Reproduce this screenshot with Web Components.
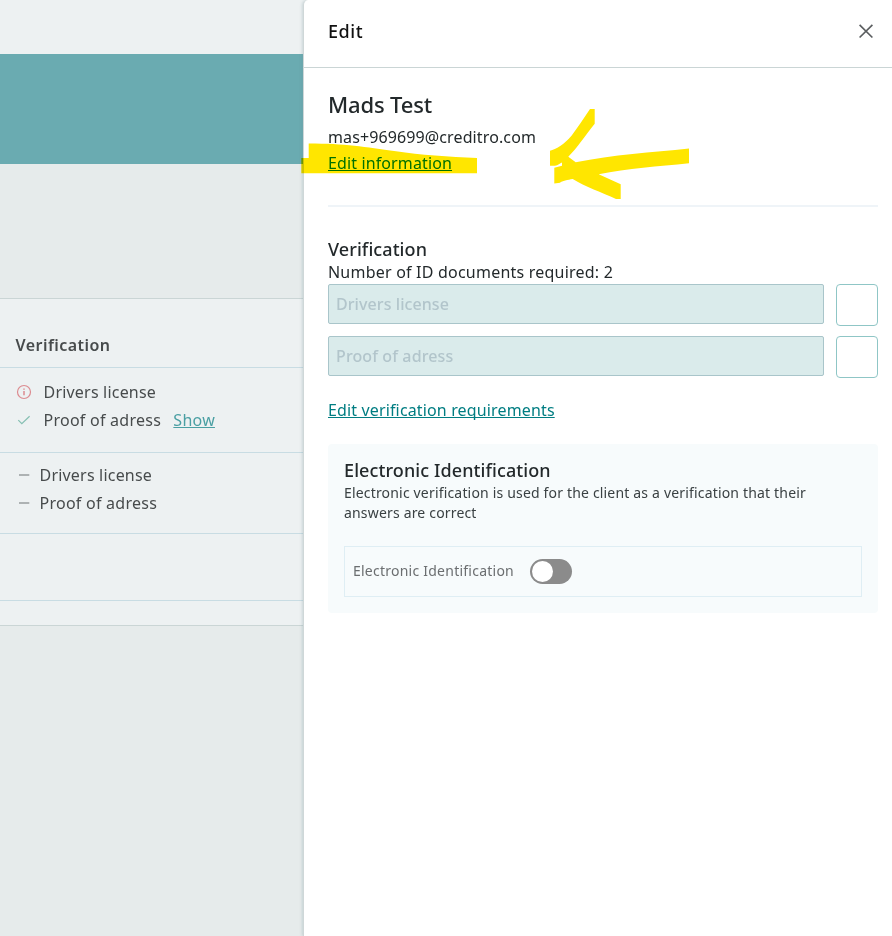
<!DOCTYPE html>
<html lang="en">
<head>
<meta charset="utf-8">
<title>Edit</title>
<style>
body { margin: 0; font: 400 16px/20px "Noto Sans", "Open Sans", sans-serif; color: #23292b; background: #fff; }
</style>
</head>
<body>
<edit-screen></edit-screen>
<script>
const define = (name, html) => customElements.define(name, class extends HTMLElement {
  constructor() {
    super();
    const t = document.createElement('template');
    t.innerHTML = html;
    this.attachShadow({ mode: 'open' }).append(t.content.cloneNode(true));
  }
});

define('status-row', `<style>
:host { display: flex; align-items: center; height: 28px; padding-left: 16px; white-space: nowrap; }
.icon { display: flex; width: 16px; height: 16px; }
.label { margin-left: var(--label-gap, 11.5px); }
</style><span class="icon"><slot name="icon"></slot></span><span class="label"><slot></slot></span><slot name="action"></slot>`);

define('text-link', `<style>
:host { display: block; color: #007d82; }
a { color: inherit; text-decoration: underline; text-decoration-thickness: 1px; text-underline-offset: 1px; text-decoration-skip-ink: none; }
</style><a><slot></slot></a>`);

define('client-list', `<style>
:host { display: flex; flex-direction: column; width: 303px; background: #e6ebeb; color: #474b4c; }
.top { height: 54px; background: #edf1f2; }
.banner { height: 110px; background: #6aabb1; }
.table { margin-top: 134px; background: #edf1f2; border: solid #cad5d5; border-width: 1px 0; height: 326px; }
.head { height: 24px; line-height: 24px; padding: 34px 0 10px 15.5px; border-bottom: 1px solid #c8dce3; font-weight: 600; letter-spacing: .45px; }
.cell { border-bottom: 1px solid #c8dce3; box-sizing: border-box; }
.a { height: 85px; padding-top: 10px; }
.b { height: 81px; padding-top: 8px; --label-gap: 7.5px; }
.c { height: 67px; }
.d { letter-spacing: .2px; } .p { letter-spacing: .25px; }
text-link { margin-left: 12.3px; letter-spacing: .25px; color: #4a9fa3; }
</style>
<div class="top"></div><div class="banner"></div>
<div class="table">
 <div class="head">Verification</div>
 <div class="cell a">
  <status-row><svg slot="icon" width="16" height="16" viewBox="0 0 16 16" fill="none" stroke="#dc8b90" stroke-width="1.2"><circle cx="8" cy="8" r="6.5"/><path d="M8 7v4.3M8 4.4v1.4" stroke-width="1.5"/></svg><span class="d">Drivers license</span></status-row>
  <status-row><svg slot="icon" width="16" height="16" viewBox="0 0 16 16" fill="none" stroke="#85bfb2" stroke-width="1.2"><path d="M2.3 8.2l3.5 3.5 7.8-7.4"/></svg><span class="p">Proof of adress</span><text-link slot="action">Show</text-link></status-row>
 </div>
 <div class="cell b">
  <status-row><svg slot="icon" width="16" height="16"><path d="M3 7h10.3v2H3z" fill="#adb2b3"/></svg><span class="d">Drivers license</span></status-row>
  <status-row><svg slot="icon" width="16" height="16"><path d="M3 7h10.3v2H3z" fill="#adb2b3"/></svg><span class="p">Proof of adress</span></status-row>
 </div>
 <div class="cell c"></div>
</div>`);

define('document-field', `<style>
:host { display: flex; gap: 12px; height: 42px; }
.input { flex: 1; box-sizing: border-box; height: 40px; line-height: 38px; padding-left: 7px; border: 1px solid #a9c5ca; border-radius: 2px; background: #daebeb; color: #b2c5cb; font-weight: 500; }
.box { box-sizing: border-box; width: 42px; height: 42px; border: 1px solid #8fc6c6; border-radius: 4px; }
</style><div class="input"><slot></slot></div><div class="box"></div>`);

define('toggle-switch', `<style>
:host { display: block; box-sizing: border-box; width: 42px; height: 25px; padding: 2px; border-radius: 13px; background: #8b8b8b; }
i { display: block; width: 21px; height: 21px; border-radius: 50%; background: #fff; }
</style><i></i>`);

define('identification-card', `<style>
:host { display: block; box-sizing: border-box; height: 169px; padding: 16px; border-radius: 4px; background: #f7fbfc; }
h3 { margin: 0; font: 500 18px/21px "Noto Sans", sans-serif; letter-spacing: .1px; }
p { margin: 2px 0 0; font-size: 14px; letter-spacing: .175px; line-height: 20px; color: #3a4143; }
.row { display: flex; align-items: center; gap: 16px; box-sizing: border-box; height: 51px; margin-top: 23px; padding-left: 8px; border: 1px solid #dfeef4; font-size: 14px; letter-spacing: .239px; color: #6b6e70; }
.row span { margin-bottom: 1px; }
</style><h3>Electronic Identification</h3>
<p>Electronic verification is used for the client as a verification that their<br>answers are correct</p>
<div class="row"><span>Electronic Identification</span><toggle-switch></toggle-switch></div>`);

define('edit-panel', `<style>
:host { display: flex; flex-direction: column; flex: 1; background: #fff; border-left: 1px solid #cfd7d8; border-top-left-radius: 5px; box-shadow: -1px 0 3px rgba(120,150,155,.3); }
header { display: flex; justify-content: space-between; height: 67px; padding: 0 18px 0 24px; border-bottom: 1px solid #cad5d5; }
header h1 { margin: 0; font: 500 18px/62px "Noto Sans", sans-serif; letter-spacing: .55px; color: #111; }
header svg { margin-top: 23px; }
main { display: flex; flex-direction: column; padding: 21px 14px 0 24px; }
h2 { margin: 0; font: 500 22px/30px "Noto Sans", sans-serif; letter-spacing: -.15px; }
h3 { margin: 30px 0 0; font: 500 18px/24px "Noto Sans", sans-serif; letter-spacing: .087px; }
.mail { margin-top: 5px; line-height: 26px; letter-spacing: .115px; }
.info { line-height: 26px; letter-spacing: .124px; }
.rule { height: 2px; margin-top: 29px; background: #eff4f8; }
.count { line-height: 22px; letter-spacing: .214px; margin-bottom: 1px; }
document-field + document-field { margin-top: 10px; }
.req { margin-top: 22px; letter-spacing: .143px; }
identification-card { margin-top: 24px; }
</style>
<header><h1>Edit</h1><svg width="16" height="16" viewBox="0 0 16 16" fill="none" stroke="#5b5e60" stroke-width="1.7"><path d="M1.6 1.9l12.8 12.6M14.4 1.9L1.6 14.5"/></svg></header>
<main>
 <h2>Mads Test</h2>
 <div class="mail">mas+969699@creditro.com</div>
 <text-link class="info">Edit information</text-link>
 <div class="rule"></div>
 <h3>Verification</h3>
 <div class="count">Number of ID documents required: 2</div>
 <document-field style="letter-spacing:.08px">Drivers license</document-field>
 <document-field style="letter-spacing:.12px">Proof of adress</document-field>
 <text-link class="req">Edit verification requirements</text-link>
 <identification-card></identification-card>
</main>`);

define('marker-strokes', `<style>
:host { position: absolute; inset: 0; pointer-events: none; mix-blend-mode: multiply; }
svg { display: block; }
</style><svg width="892" height="936" fill="#ffe600">
<path d="M308.7 143.5C345 143.500 365 147 396 151.300C420 155 449 157 477 158V173.200H301.300V158H308.700Z"/>
<path d="M590 109H594.700V123.700C585 136 577 148 568.300 156.700L575.700 162.300C613 154.500 652 152.500 689 148.500V163.300C658 166.500 628 168.500 598.700 174.300L620.700 184.300V199H616C602 192.500 585 186.500 572.700 179C568 179.800 562 181 560 182.700L554.300 183.500V167.700L562 165.700V162.500C560 163.500 558 165.300 555 165.700H550V150.700C556 149.500 564 144.500 571.700 135.500C578 127 584 118 590 109Z"/>
</svg>`);

define('edit-screen', `<style>
:host { position: relative; display: flex; height: 936px; overflow: hidden; background: linear-gradient(#edf1f2 54px, #e6ebeb 54px); }
client-list { flex: none; }
edit-panel { position: relative; }
</style><client-list></client-list><edit-panel></edit-panel><marker-strokes></marker-strokes>`);
</script>
</body>
</html>
